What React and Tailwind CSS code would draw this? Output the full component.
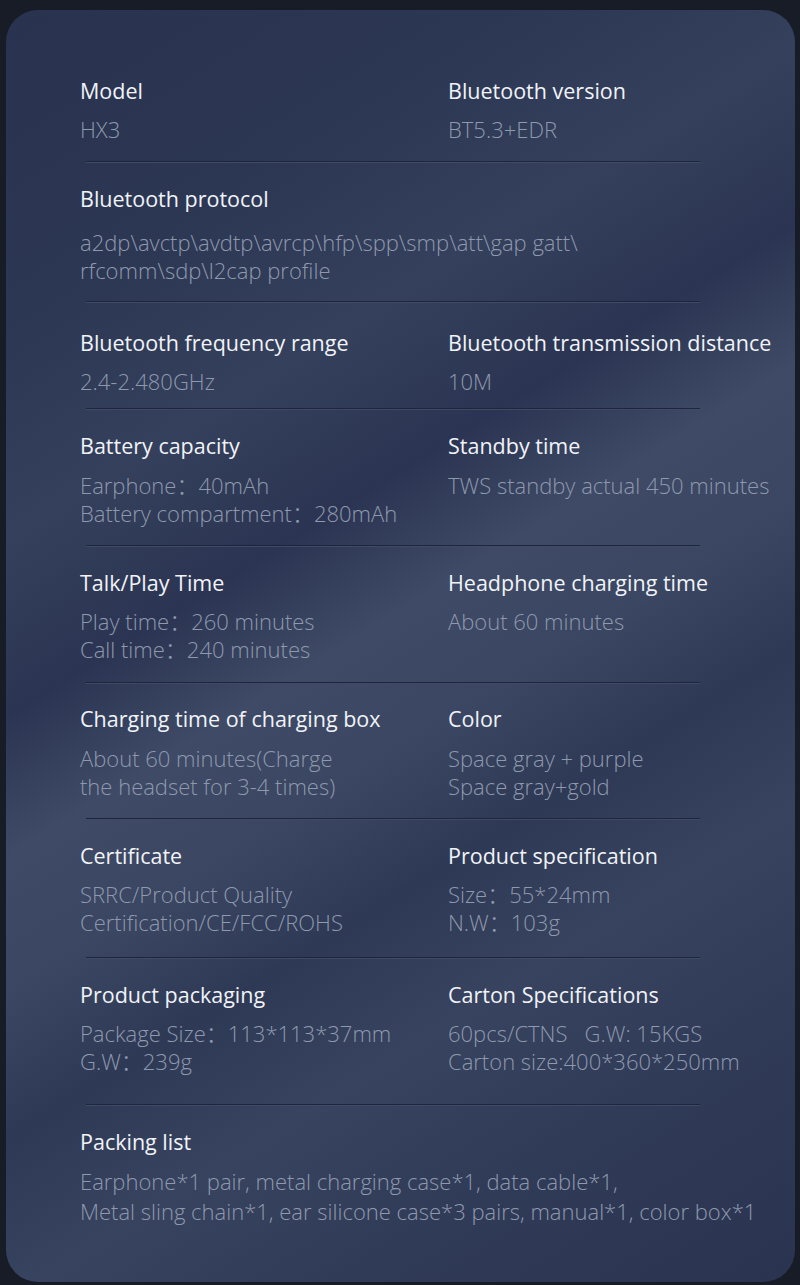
import React from 'react';

const rows = [
  {
    pt: 'pt-0', gap: 'mt-[10px]', pb: 'pb-[18px]',
    cols: [
      { title: 'Model', lines: ['HX3'] },
      { title: 'Bluetooth version', lines: ['BT5.3+EDR'] },
    ],
  },
  {
    pt: 'pt-[22px]', gap: 'mt-[15px]', pb: 'pb-[17px]', full: true,
    cols: [
      {
        title: 'Bluetooth protocol',
        lines: ['a2dp\\avctp\\avdtp\\avrcp\\hfp\\spp\\smp\\att\\gap gatt\\', 'rfcomm\\sdp\\l2cap profile'],
      },
    ],
  },
  {
    pt: 'pt-[26px]', gap: 'mt-[10px]', pb: 'pb-[13px]',
    cols: [
      { title: 'Bluetooth frequency range', lines: ['2.4-2.480GHz'] },
      { title: 'Bluetooth transmission distance', lines: ['10M'] },
    ],
  },
  {
    pt: 'pt-[22px]', gap: 'mt-[11px]', pb: 'pb-[18px]',
    cols: [
      { title: 'Battery capacity', lines: ['Earphone：40mAh', 'Battery compartment：280mAh'] },
      { title: 'Standby time', lines: ['TWS standby actual 450 minutes'] },
    ],
  },
  {
    pt: 'pt-[22px]', gap: 'mt-[10px]', pb: 'pb-[19px]',
    cols: [
      { title: 'Talk/Play Time', lines: ['Play time：260 minutes', 'Call time：240 minutes'] },
      { title: 'Headphone charging time', lines: ['About 60 minutes'] },
    ],
  },
  {
    pt: 'pt-[21px]', gap: 'mt-[11px]', pb: 'pb-[18px]',
    cols: [
      { title: 'Charging time of charging box', lines: ['About 60 minutes(Charge', 'the headset for 3-4 times)'] },
      { title: 'Color', lines: ['Space gray + purple', 'Space gray+gold'] },
    ],
  },
  {
    pt: 'pt-[22px]', gap: 'mt-[10px]', pb: 'pb-[21px]',
    cols: [
      { title: 'Certificate', lines: ['SRRC/Product Quality', 'Certification/CE/FCC/ROHS'] },
      { title: 'Product specification', lines: ['Size：55*24mm', 'N.W：103g'] },
    ],
  },
  {
    pt: 'pt-[22px]', gap: 'mt-[10px]', pb: 'pb-[29px]',
    cols: [
      { title: 'Product packaging', lines: ['Package Size：113*113*37mm', 'G.W：239g'] },
      { title: 'Carton Specifications', lines: ['60pcs/CTNS\u00a0\u00a0 G.W: 15KGS', 'Carton size:400*360*250mm'] },
    ],
  },
  {
    pt: 'pt-[22px]', gap: 'mt-[10px]', pb: 'pb-0', full: true, wide: true,
    cols: [
      {
        title: 'Packing list',
        lines: [
          'Earphone*1 pair, metal charging case*1, data cable*1,',
          'Metal sling chain*1, ear silicone case*3 pairs, manual*1, color box*1',
        ],
      },
    ],
  },
];

const Spec = ({ item, gap, wide }) => (
  <div>
    <div className="text-[21.5px] leading-[28px] text-[#f1f3f7] whitespace-nowrap">{item.title}</div>
    <div className={gap}>
      {item.lines.map((line, i) => (
        <div
          key={i}
          className={`text-[22px] font-light text-[#8f99ad] whitespace-nowrap ${wide ? 'leading-[30px]' : 'leading-[28px]'}`}
        >
          {line}
        </div>
      ))}
    </div>
  </div>
);

export default function App() {
  return (
    <div className="w-full h-[1285px] bg-[#181c26] pt-[10px] pl-[6px] pr-[5px] pb-[3px] font-['Open_Sans','Noto_Sans','Noto_Sans_CJK_SC',sans-serif]">
      <div className="h-full rounded-[32px] bg-[linear-gradient(148deg,#29334f_0%,#2c3754_18%,#34405c_30%,#2b3553_40%,#3e4a66_48%,#3a4662_56%,#2e3956_64%,#37435f_73%,#303b58_84%,#2a3451_100%)] pl-[74px] pt-[67px]">
        {rows.map((row, idx) => (
          <div key={idx}>
            <div className={`${row.pt} ${row.pb}`}>
              {row.full ? (
                <Spec item={row.cols[0]} gap={row.gap} wide={row.wide} />
              ) : (
                <div className="grid grid-cols-[368px_1fr]">
                  {row.cols.map((c, i) => (
                    <Spec key={i} item={c} gap={row.gap} />
                  ))}
                </div>
              )}
            </div>
            {idx < rows.length - 1 && (
              <div className="ml-[6px] w-[614px] h-[2px] border-t border-[#1e263d] border-b border-b-[#3f4a64]" />
            )}
          </div>
        ))}
      </div>
    </div>
  );
}
